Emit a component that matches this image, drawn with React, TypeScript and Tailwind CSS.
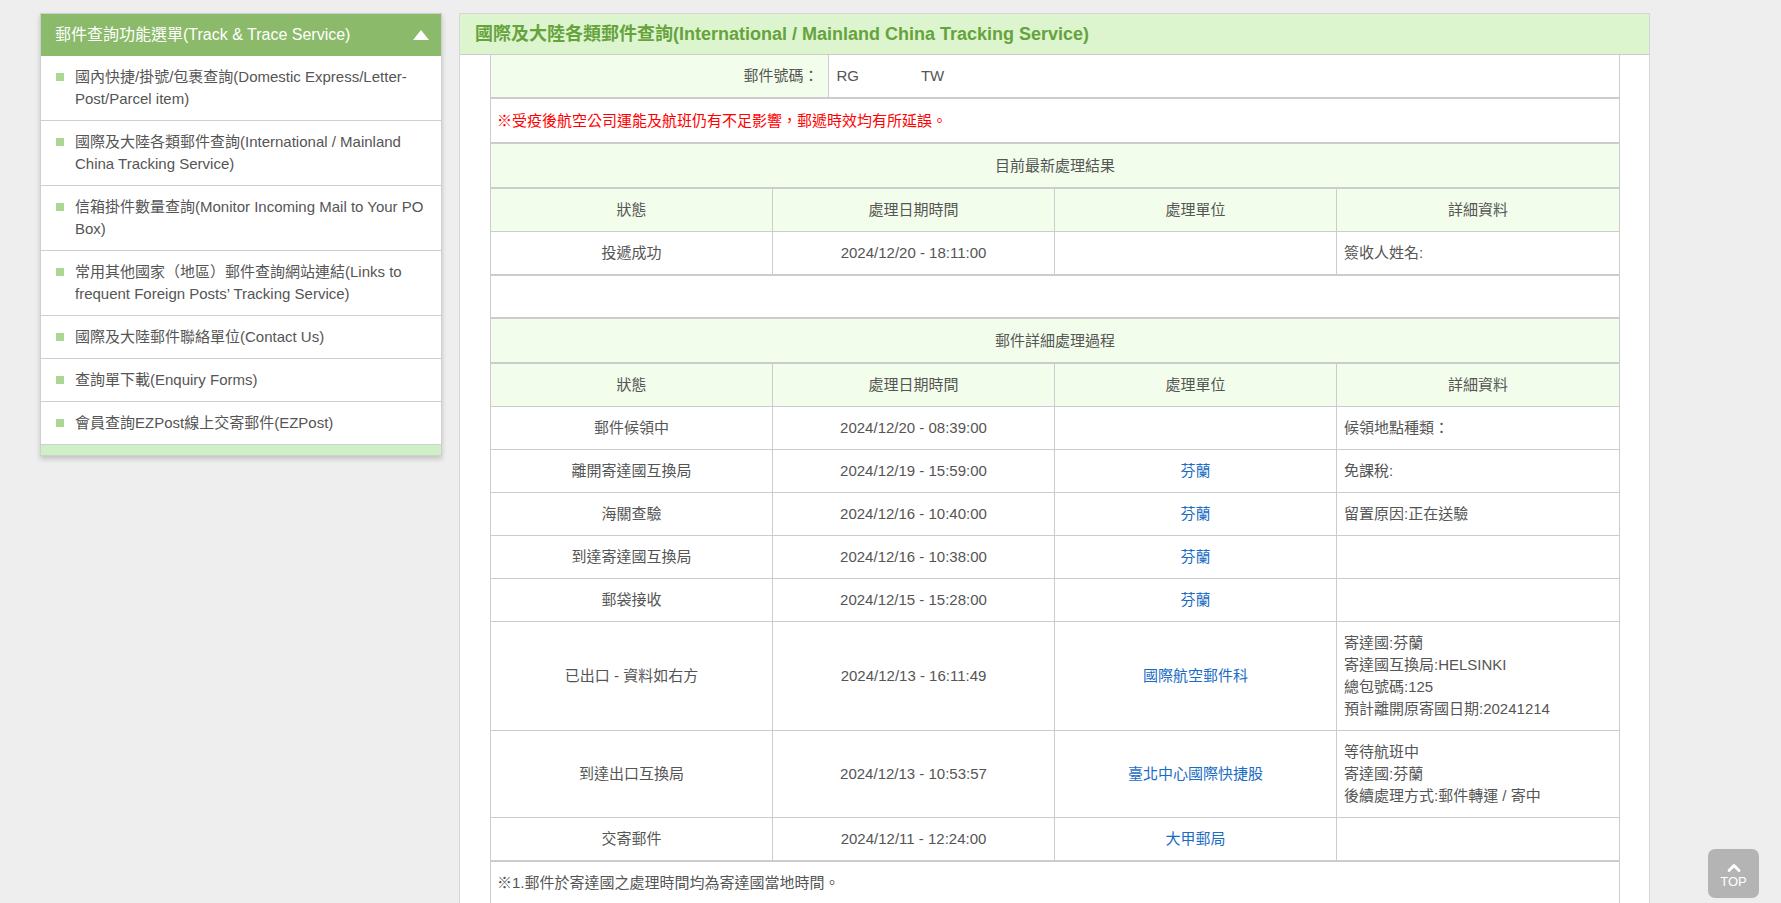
import { ChevronUp } from 'lucide-react';

const menuItems = [
  '國內快捷/掛號/包裹查詢(Domestic Express/Letter-Post/Parcel item)',
  '國際及大陸各類郵件查詢(International / Mainland China Tracking Service)',
  '信箱掛件數量查詢(Monitor Incoming Mail to Your PO Box)',
  '常用其他國家（地區）郵件查詢網站連結(Links to frequent Foreign Posts’ Tracking Service)',
  '國際及大陸郵件聯絡單位(Contact Us)',
  '查詢單下載(Enquiry Forms)',
  '會員查詢EZPost線上交寄郵件(EZPost)',
];

interface TrackRow {
  status: string;
  time: string;
  unit: string;
  details: string[];
}

const history: TrackRow[] = [
  { status: '郵件候領中', time: '2024/12/20 - 08:39:00', unit: '', details: ['候領地點種類：'] },
  { status: '離開寄達國互換局', time: '2024/12/19 - 15:59:00', unit: '芬蘭', details: ['免課稅:'] },
  { status: '海關查驗', time: '2024/12/16 - 10:40:00', unit: '芬蘭', details: ['留置原因:正在送驗'] },
  { status: '到達寄達國互換局', time: '2024/12/16 - 10:38:00', unit: '芬蘭', details: [] },
  { status: '郵袋接收', time: '2024/12/15 - 15:28:00', unit: '芬蘭', details: [] },
  {
    status: '已出口 - 資料如右方',
    time: '2024/12/13 - 16:11:49',
    unit: '國際航空郵件科',
    details: ['寄達國:芬蘭', '寄達國互換局:HELSINKI', '總包號碼:125', '預計離開原寄國日期:20241214'],
  },
  {
    status: '到達出口互換局',
    time: '2024/12/13 - 10:53:57',
    unit: '臺北中心國際快捷股',
    details: ['等待航班中', '寄達國:芬蘭', '後續處理方式:郵件轉運 / 寄中'],
  },
  { status: '交寄郵件', time: '2024/12/11 - 12:24:00', unit: '大甲郵局', details: [] },
];

const HeaderRow = () => (
  <div className="grid grid-cols-4 bg-[#f2fdeb] border-b border-[#ccc]">
    {['狀態', '處理日期時間', '處理單位', '詳細資料'].map((h, i) => (
      <div
        key={h}
        className={`py-[10px] text-center ${i < 3 ? 'border-r border-[#ccc]' : ''}`}
      >
        {h}
      </div>
    ))}
  </div>
);

const DataRow = ({ row, last }: { row: TrackRow; last?: boolean }) => (
  <div className={`grid grid-cols-4 ${last ? 'border-b-2' : 'border-b'} border-[#ccc]`}>
    <div className="py-[10px] px-[7px] flex items-center justify-center border-r border-[#ccc]">
      {row.status}
    </div>
    <div className="py-[10px] px-[7px] flex items-center justify-center border-r border-[#ccc]">
      {row.time}
    </div>
    <div className="py-[10px] px-[7px] flex items-center justify-center border-r border-[#ccc] text-[#1a6cc4]">
      {row.unit}
    </div>
    <div className="py-[10px] px-[7px] flex flex-col justify-center">
      {row.details.map((d) => (
        <div key={d}>{d}</div>
      ))}
    </div>
  </div>
);

export default function App() {
  return (
    <div
      className="h-screen overflow-hidden bg-[#eeeeee] text-[15px] leading-[22px] text-[#555]"
      style={{ fontFamily: '"Liberation Sans", Arial, "Noto Sans CJK TC", sans-serif' }}
    >
      <div className="flex items-start pl-[40px] pt-[13px] gap-[17px]">
        {/* left menu */}
        <div className="w-[402px] shrink-0 bg-white border border-[#cfcfcf] shadow-[0_3px_5px_rgba(0,0,0,0.18)]">
          <div className="h-[42px] bg-[#8aba6a] flex items-center justify-between pl-[14px] pr-[12px] pb-[1px] text-white text-[16px]">
            <span>郵件查詢功能選單(Track &amp; Trace Service)</span>
            <span className="w-0 h-0 border-l-[8px] border-r-[8px] border-b-[10px] border-l-transparent border-r-transparent border-b-white" />
          </div>
          {menuItems.map((item) => (
            <div key={item} className="flex border-b border-[#cfcfcf] py-[10px] pl-[15px] pr-[10px]">
              <span className="mt-[7px] w-[8px] h-[8px] bg-[#acd792] shrink-0" />
              <span className="ml-[11px]">{item}</span>
            </div>
          ))}
          <div className="h-[10px] bg-[#cdf0c6]" />
        </div>

        {/* main panel */}
        <div className="w-[1191px] shrink-0 bg-white border border-[#d6d6d6]">
          <div className="h-[41px] bg-[#dcf5cf] border-b border-[#ccc] flex items-center pl-[15px] text-[18px] font-bold text-[#66a33d]">
            國際及大陸各類郵件查詢(International / Mainland China Tracking Service)
          </div>
          <div className="pl-[30px] pr-[29px] pb-[40px]">
            <div className="border-x border-[#ccc]">
              <div className="grid grid-cols-[30%_70%] border-b-2 border-[#ccc]">
                <div className="bg-[#f2fdeb] text-right py-[10px] pr-[10px] border-r border-[#ccc]">郵件號碼：</div>
                <div className="py-[10px] pl-[7px] flex">
                  <span>RG</span>
                  <span className="w-[62px]" />
                  <span>TW</span>
                </div>
              </div>
              <div className="pt-[11px] pb-[10px] px-[6px] text-[#ff0000] border-b-2 border-[#ccc]">
                ※受疫後航空公司運能及航班仍有不足影響，郵遞時效均有所延誤。
              </div>
              <div className="pt-[11px] pb-[10px] text-center bg-[#f2fdeb] border-b-2 border-[#ccc]">目前最新處理結果</div>
              <HeaderRow />
              <div className="grid grid-cols-4 border-b-2 border-[#ccc]">
                <div className="py-[10px] text-center border-r border-[#ccc]">投遞成功</div>
                <div className="py-[10px] text-center border-r border-[#ccc]">2024/12/20 - 18:11:00</div>
                <div className="py-[10px] border-r border-[#ccc]" />
                <div className="py-[10px] px-[7px]">簽收人姓名:</div>
              </div>
              <div className="h-[43px] border-b-2 border-[#ccc]" />
              <div className="pt-[11px] pb-[10px] text-center bg-[#f2fdeb] border-b-2 border-[#ccc]">郵件詳細處理過程</div>
              <HeaderRow />
              {history.map((row, i) => (
                <DataRow key={row.status} row={row} last={i === history.length - 1} />
              ))}
              <div className="py-[10px] px-[6px]">※1.郵件於寄達國之處理時間均為寄達國當地時間。</div>
            </div>
          </div>
        </div>
      </div>

      <button className="fixed right-[22px] bottom-[5px] w-[51px] h-[49px] rounded-[7px] bg-[#b4b4b4] text-white flex flex-col items-center justify-center">
        <ChevronUp size={20} strokeWidth={3.5} className="-mb-[3px]" />
        <span className="text-[13px] leading-[14px]">TOP</span>
      </button>
    </div>
  );
}
